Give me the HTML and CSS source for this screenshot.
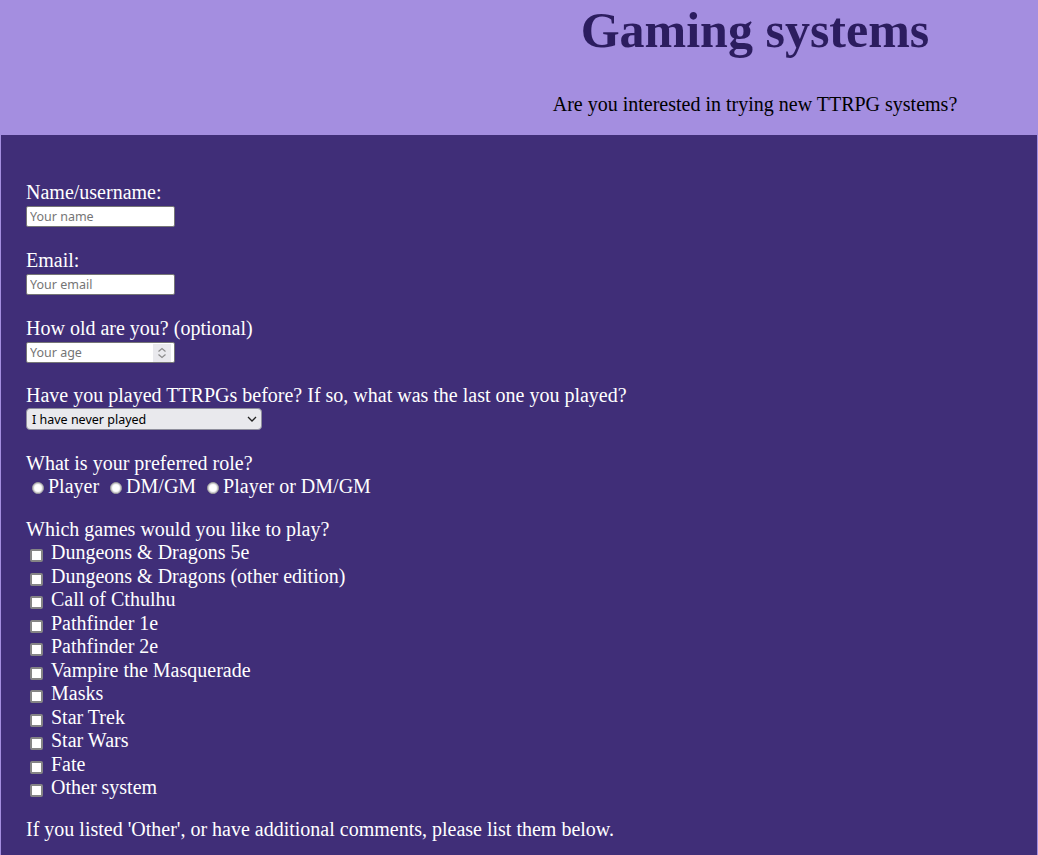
FILE: index.html
```html
<!DOCTYPE html>
<html lang="en">
<head>
<meta charset="utf-8">
<title>Gaming systems</title>
<link rel="stylesheet" href="styles.css">
</head>
<body>
<header class="top">
  <h1 class="title">Gaming systems</h1>
  <p class="subtitle">Are you interested in trying new TTRPG systems?</p>
</header>
<main class="survey">
  <div class="field">
    <label class="question" for="name">Name/username:</label>
    <input class="text-input" id="name" type="text" placeholder="Your name">
  </div>
  <div class="field">
    <label class="question" for="email">Email:</label>
    <input class="text-input" id="email" type="email" placeholder="Your email">
  </div>
  <div class="field field-age">
    <label class="question" for="age">How old are you? (optional)</label>
    <span class="number-wrap">
      <input class="text-input number-input" id="age" type="number" placeholder="Your age">
      <span class="spinner" aria-hidden="true">
        <svg width="18" height="18" viewBox="0 0 18 18">
          <path d="M5.5 7.5 L9 4.5 L12.5 7.5" fill="none" stroke="#8c8c8c" stroke-width="1.2"/>
          <path d="M5.5 10.5 L9 13.5 L12.5 10.5" fill="none" stroke="#8c8c8c" stroke-width="1.2"/>
        </svg>
      </span>
    </span>
  </div>
  <div class="field">
    <label class="question" for="last">Have you played TTRPGs before? If so, what was the last one you played?</label>
    <span class="select-wrap">
      <select class="dropdown" id="last">
        <option>I have never played</option>
        <option>Dungeons &amp; Dragons</option>
        <option>Other</option>
      </select>
      <svg class="select-arrow" width="10" height="6" viewBox="0 0 10 6" aria-hidden="true">
        <path d="M1 1 L5 5 L9 1" fill="none" stroke="#222" stroke-width="1.3"/>
      </svg>
    </span>
  </div>
  <div class="field field-role">
    <p class="question">What is your preferred role?</p>
    <div class="radio-row">
      <label class="radio-label"><input type="radio" name="role" class="radio">Player</label>
      <label class="radio-label"><input type="radio" name="role" class="radio">DM/GM</label>
      <label class="radio-label"><input type="radio" name="role" class="radio">Player or DM/GM</label>
    </div>
  </div>
  <div class="field field-games">
    <p class="question">Which games would you like to play?</p>
    <ul class="games">
      <li class="game"><label><input type="checkbox" class="check"> Dungeons &amp; Dragons 5e</label></li>
      <li class="game"><label><input type="checkbox" class="check"> Dungeons &amp; Dragons (other edition)</label></li>
      <li class="game"><label><input type="checkbox" class="check"> Call of Cthulhu</label></li>
      <li class="game"><label><input type="checkbox" class="check"> Pathfinder 1e</label></li>
      <li class="game"><label><input type="checkbox" class="check"> Pathfinder 2e</label></li>
      <li class="game"><label><input type="checkbox" class="check"> Vampire the Masquerade</label></li>
      <li class="game"><label><input type="checkbox" class="check"> Masks</label></li>
      <li class="game"><label><input type="checkbox" class="check"> Star Trek</label></li>
      <li class="game"><label><input type="checkbox" class="check"> Star Wars</label></li>
      <li class="game"><label><input type="checkbox" class="check"> Fate</label></li>
      <li class="game"><label><input type="checkbox" class="check"> Other system</label></li>
    </ul>
  </div>
  <div class="field">
    <label class="question" for="comments">If you listed 'Other', or have additional comments, please list them below.</label>
    <textarea class="comments" id="comments" rows="4" cols="40"></textarea>
  </div>
</main>
</body>
</html>
```
FILE: styles.css
```css
html, body {
  margin: 0;
  padding: 0;
}

body {
  background: #a48ee0;
  font-family: "Liberation Serif", "Times New Roman", serif;
  font-size: 20px;
  color: #ffffff;
}

.top {
  padding: 3px 0 19px 472px;
  text-align: center;
  color: #000000;
}

.title {
  margin: 0;
  font-size: 50px;
  line-height: 55px;
  font-weight: bold;
  color: #2c1d5f;
}

.subtitle {
  margin: 35px 0 0;
  font-size: 20px;
  line-height: 23px;
}

.survey {
  margin: 0 1px;
  padding: 46px 25px 40px;
  background: #402e78;
  display: flex;
  flex-direction: column;
  gap: 22px;
}

.field {
  display: flex;
  flex-direction: column;
  align-items: flex-start;
}

.field-age {
  margin-bottom: -1px;
}

.field-role {
  margin-bottom: -2px;
}

.field-games {
  margin-bottom: -4px;
}

.question {
  display: block;
  margin: 0;
  line-height: 23px;
}

.text-input {
  margin-top: 2px;
  width: 149px;
  height: 21px;
  box-sizing: border-box;
  border: 1px solid #767676;
  border-radius: 2px;
  padding: 1px 3px;
  font-family: "Noto Sans", "DejaVu Sans", sans-serif;
  font-size: 12.5px;
  background: #ffffff;
  color: #000000;
}

.text-input::placeholder {
  color: #757575;
}

.number-wrap {
  position: relative;
  display: block;
  margin-top: 2px;
  height: 21px;
}

.number-input {
  margin-top: 0;
  display: block;
  -moz-appearance: textfield;
}

.number-input::-webkit-inner-spin-button,
.number-input::-webkit-outer-spin-button {
  -webkit-appearance: none;
  margin: 0;
}

.spinner {
  position: absolute;
  top: 2px;
  right: 4px;
  width: 18px;
  height: 18px;
  background: #e9e9ed;
  display: block;
}

.spinner svg {
  display: block;
}

.select-wrap {
  position: relative;
  display: block;
  margin-top: 1px;
  height: 22px;
}

.dropdown {
  display: block;
  -webkit-appearance: none;
  appearance: none;
  width: 236px;
  height: 22px;
  box-sizing: border-box;
  padding: 0 20px 0 5px;
  font-family: "Noto Sans", "DejaVu Sans", sans-serif;
  font-size: 12.5px;
  color: #000000;
  background: #e9e9ed;
  border: 1px solid #8f8f9d;
  border-radius: 4px;
}

.select-arrow {
  position: absolute;
  left: 221px;
  top: 8px;
}

.radio-row {
  line-height: 23px;
}

.radio {
  -webkit-appearance: none;
  appearance: none;
  width: 12px;
  height: 12px;
  margin: 0 4px 0 6px;
  vertical-align: -1px;
  border-radius: 50%;
  background: #ffffff;
  border: 1px solid #9a9a9a;
  box-shadow: inset 0 0 1px 1px #c8c8c8;
  box-sizing: border-box;
}

.games {
  list-style: none;
  margin: 0;
  padding: 0;
}

.game {
  line-height: 23.5px;
}

.check {
  -webkit-appearance: none;
  appearance: none;
  width: 13px;
  height: 13px;
  margin: 0 3px 0 4px;
  vertical-align: -3px;
  box-sizing: border-box;
  border: 2px solid #858585;
  border-radius: 2px;
  background: #ffffff;
}

.comments {
  margin-top: 24px;
}
```
